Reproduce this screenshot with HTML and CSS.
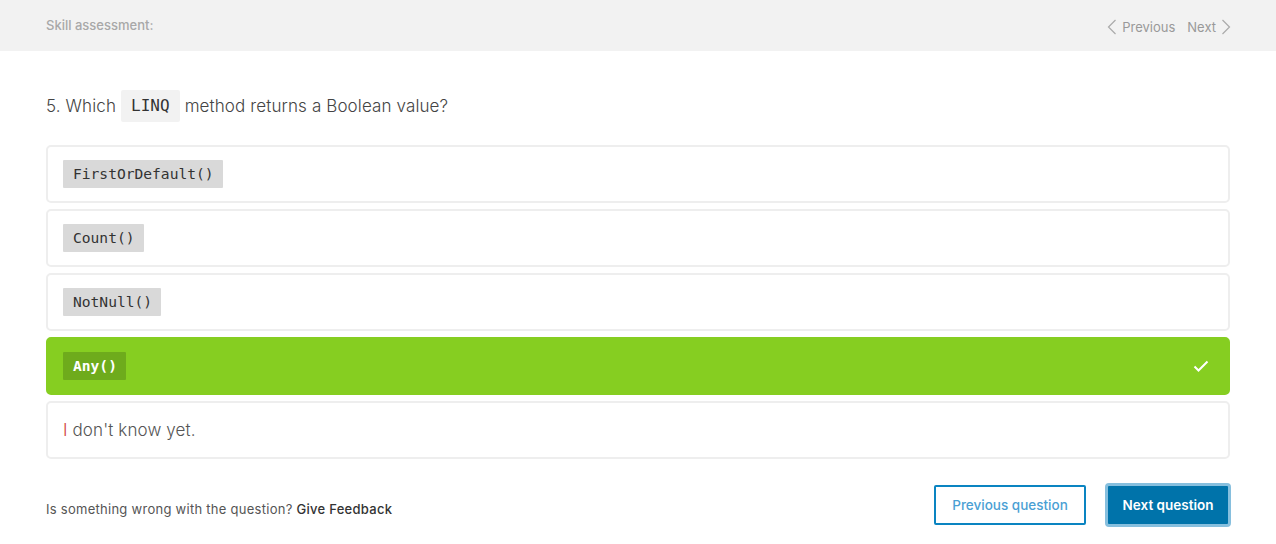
FILE: index.html
```html
<!DOCTYPE html>
<html>
<head>
<meta charset="utf-8">
<link rel="stylesheet" href="styles.css">
</head>
<body>
<header class="topbar">
  <div class="title">Skill assessment:</div>
  <nav class="pager">
    <span class="pager-link"><svg class="chev" width="10" height="16" viewBox="0 0 10 16"><path d="M8.5 1 L1.5 8 L8.5 15" fill="none" stroke="#aaa" stroke-width="1.2"/></svg>Previous</span>
    <span class="pager-link">Next<svg class="chev" width="10" height="16" viewBox="0 0 10 16"><path d="M1.5 1 L8.5 8 L1.5 15" fill="none" stroke="#aaa" stroke-width="1.2"/></svg></span>
  </nav>
</header>
<main class="content">
  <h1 class="question">5. Which <code class="inline">LINQ</code> method returns a Boolean value?</h1>
  <div class="options">
    <div class="option"><code class="chip">FirstOrDefault()</code></div>
    <div class="option"><code class="chip">Count()</code></div>
    <div class="option"><code class="chip">NotNull()</code></div>
    <div class="option correct"><code class="chip">Any()</code>
      <svg class="check" width="16" height="12" viewBox="0 0 16 12"><path d="M1.5 6.5 L5.5 10.5 L14.5 1.5" fill="none" stroke="#fff" stroke-width="2"/></svg>
    </div>
    <div class="option idk"><span><span class="red">I</span> don't know yet.</span></div>
  </div>
  <div class="footer">
    <div class="feedback">Is something wrong with the question? <span class="fb-link">Give Feedback</span></div>
    <div class="buttons">
      <button class="btn btn-outline">Previous question</button>
      <button class="btn btn-primary">Next question</button>
    </div>
  </div>
</main>
</body>
</html>
```
FILE: styles.css
```css
* { box-sizing: border-box; }
body {
  margin: 0;
  font-family: "Inter", "Liberation Sans", sans-serif;
  color: #333;
  background: #fff;
}
.topbar {
  height: 51px;
  background: #f2f2f2;
  display: flex;
  align-items: center;
  justify-content: space-between;
  padding: 0 45px 0 46px;
}
.title {
  font-size: 13px;
  font-weight: 500;
  color: #a8a8a8;
  margin-top: -2px;
}
.pager {
  display: flex;
  gap: 12px;
  font-size: 13px;
  color: #999;
  margin-top: 2px;
}
.pager-link {
  display: flex;
  align-items: center;
  gap: 5px;
}
.content {
  padding: 0 46px;
}
.question {
  font-size: 17px;
  font-weight: 300;
  color: #444;
  letter-spacing: 0.12px;
  margin: 38px 0 22px;
  height: 34px;
  display: flex;
  align-items: center;
}
.inline {
  font-family: "DejaVu Sans Mono", monospace;
  font-size: 16px;
  font-weight: normal;
  background: #f2f2f2;
  color: #333;
  padding: 0 10px;
  height: 32px;
  line-height: 32px;
  margin: 0 5px;
  border-radius: 2px;
  letter-spacing: 0;
}
.options {
  display: flex;
  flex-direction: column;
  gap: 6px;
}
.option {
  height: 58px;
  border: 2px solid #eeeeee;
  border-radius: 5px;
  display: flex;
  align-items: center;
  justify-content: space-between;
  padding: 0 19px 0 15px;
}
.chip {
  font-family: "DejaVu Sans Mono", monospace;
  font-size: 14.6px;
  background: #d9d9d9;
  color: #333;
  height: 28px;
  line-height: 28px;
  padding: 0 9px 0 10px;
  border-radius: 1px;
}
.correct {
  background: #86ce21;
  border-color: #86ce21;
}
.correct .chip {
  background: #6eab1c;
  color: #fff;
  font-weight: bold;
}
.idk {
  font-size: 17px;
  font-weight: 300;
  color: #555;
  letter-spacing: 0.12px;
}
.red { color: #d0413a; }
.footer {
  display: flex;
  justify-content: space-between;
  align-items: center;
  margin-top: 24px;
}
.feedback {
  font-size: 13px;
  color: #555;
  letter-spacing: 0.27px;
  margin-top: 8px;
}
.fb-link { color: #333; font-weight: 500; }
.buttons {
  display: flex;
  align-items: center;
  gap: 19px;
  margin-right: -1px;
}
.btn {
  font-family: "Inter", "Liberation Sans", sans-serif;
  font-size: 13.5px;
  border-radius: 2px;
  cursor: pointer;
}
.btn-outline {
  height: 40px;
  width: 152px;
  background: #fff;
  border: 2px solid #0a84c1;
  color: #4a9fd4;
  font-weight: 500;
}
.btn-primary {
  height: 44px;
  width: 126px;
  background: #0073aa;
  border: 3px solid #86bfde;
  color: #fff;
  font-weight: 600;
  border-radius: 4px;
}
```
